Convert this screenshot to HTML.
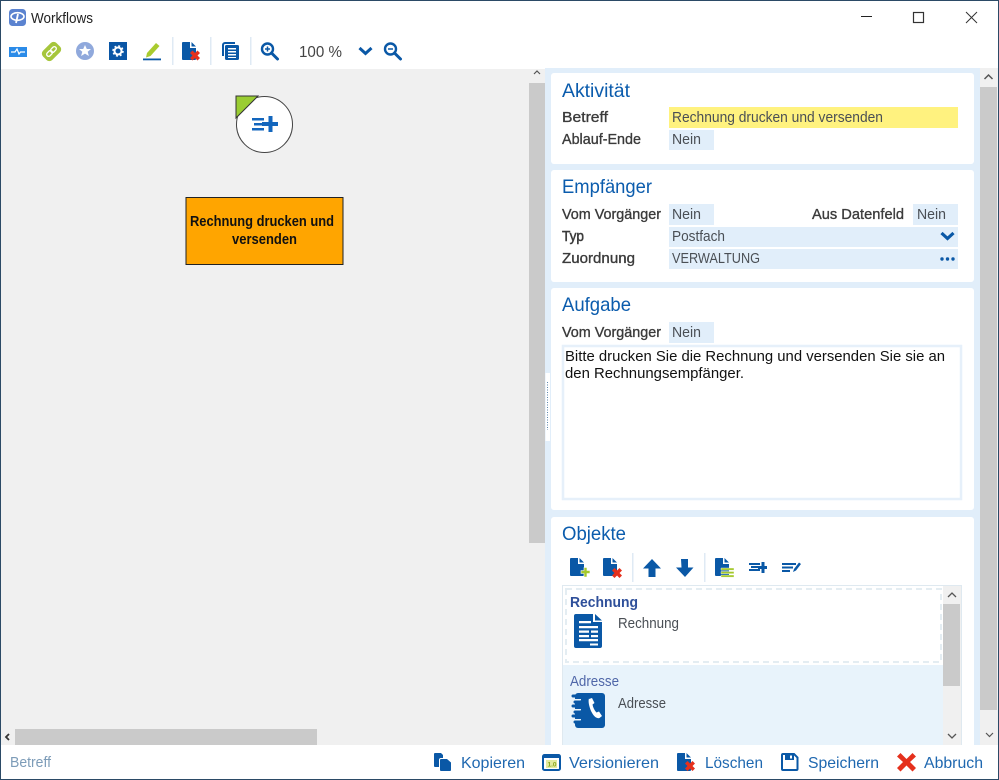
<!DOCTYPE html>
<html lang="de"><head><meta charset="utf-8"><title>Workflows</title>
<style>
html,body{margin:0;padding:0;background:#fff;width:999px;height:780px;overflow:hidden}
svg{display:block}
text{font-family:"Liberation Sans",sans-serif;font-size:15px;white-space:pre}
.l{fill:#3b3b3b;stroke:#3b3b3b;stroke-width:.35}
.v{fill:#4a4f55}
.h{fill:#0b5cad;font-size:19.500px}
.f{fill:#1f68b0;font-size:16px}
.b{fill:#0a58a6}
</style></head><body>
<svg width="999" height="780" viewBox="0 0 999 780" xmlns="http://www.w3.org/2000/svg">
<defs>
<path id="doc" d="M1 0H8V6H14V17a1 1 0 0 1-1 1H1a1 1 0 0 1-1-1V1a1 1 0 0 1 1-1ZM9.500 0L14 4.500H9.500Z"/>
<path id="x" d="M0 2.500L2.500 0L5 2.500L7.500 0L10 2.500L7.500 5L10 7.500L7.500 10L5 7.500L2.500 10L0 7.500L2.500 5Z" fill="#e5301c"/>
</defs>
<rect width="999" height="780" fill="#fff"/>
<!-- canvas -->
<rect x="1" y="69" width="544" height="676" fill="#f0f0f0"/>
<rect x="529" y="83" width="16" height="460" fill="#cacaca"/>
<rect x="15" y="729" width="302" height="16" fill="#cacaca"/>
<path d="M534 74l3-3 3 3" fill="none" stroke="#555" stroke-width="1.200"/>
<path d="M9 734l-3 3 3 3" fill="none" stroke="#333" stroke-width="1.800"/>
<!-- node -->
<circle cx="264.500" cy="124.500" r="28" fill="#fff" stroke="#444" stroke-width="1"/>
<path d="M236 96H258L236 118Z" fill="#9acd32" stroke="#333" stroke-width="1"/>
<path d="M252 118H264V120.500H252ZM254 123H262V125.500H254ZM252 128H264V130.500H252ZM268.500 116H272.500V122H278V126H272.500V132H268.500V126H262V122H268.500Z" fill="#1366bd"/>
<rect x="186" y="197.500" width="157" height="67" fill="#ffa500" stroke="#222" stroke-width="1"/>
<text x="190" y="226" font-weight="700" textLength="144" lengthAdjust="spacingAndGlyphs" fill="#111">Rechnung drucken und</text>
<text x="232" y="244" font-weight="700" textLength="65" lengthAdjust="spacingAndGlyphs" fill="#111">versenden</text>
<!-- right panel -->
<rect x="545" y="68" width="435" height="677" fill="#e1eefa"/>
<rect x="545.500" y="373" width="4.500" height="68" fill="#fff"/>
<line x1="547.500" y1="382" x2="547.500" y2="430" stroke="#5c86ad" stroke-width="1" stroke-dasharray="1 1.500"/>
<rect x="980" y="68" width="18" height="677" fill="#f0f0f0"/>
<rect x="980" y="87" width="17" height="623" fill="#cacaca"/>
<path d="M984.500 79l4-4 4 4" fill="none" stroke="#555" stroke-width="1.500"/>
<path d="M986 733l3.500 3.500 3.500-3.500" fill="none" stroke="#555" stroke-width="1.200"/>
<rect x="551" y="73" width="423" height="91" rx="3" fill="#fff"/>
<rect x="551" y="170" width="423" height="112" rx="3" fill="#fff"/>
<rect x="551" y="288" width="423" height="222" rx="3" fill="#fff"/>
<path d="M551 745V520a3 3 0 0 1 3-3H971a3 3 0 0 1 3 3V745Z" fill="#fff"/>
<!-- Aktivitaet -->
<text class="h" x="562" y="97" textLength="68" lengthAdjust="spacingAndGlyphs">Aktivität</text>
<text class="l" x="562" y="122" textLength="46" lengthAdjust="spacingAndGlyphs">Betreff</text>
<rect x="669" y="107" width="289" height="21" fill="#fff27f"/>
<text class="v" x="672" y="122" textLength="211" lengthAdjust="spacingAndGlyphs">Rechnung drucken und versenden</text>
<text class="l" x="562" y="144" textLength="79" lengthAdjust="spacingAndGlyphs">Ablauf-Ende</text>
<rect x="669" y="130" width="45" height="20" fill="#e1eefa"/>
<text class="v" x="672" y="144" textLength="29" lengthAdjust="spacingAndGlyphs">Nein</text>
<!-- Empfaenger -->
<text class="h" x="562" y="193" textLength="90" lengthAdjust="spacingAndGlyphs">Empfänger</text>
<text class="l" x="562" y="219" textLength="99" lengthAdjust="spacingAndGlyphs">Vom Vorgänger</text>
<rect x="669" y="204" width="45" height="21" fill="#e1eefa"/>
<text class="v" x="672" y="219" textLength="29" lengthAdjust="spacingAndGlyphs">Nein</text>
<text class="l" x="812" y="219" textLength="92" lengthAdjust="spacingAndGlyphs">Aus Datenfeld</text>
<rect x="913" y="204" width="45" height="21" fill="#e1eefa"/>
<text class="v" x="917" y="219" textLength="29" lengthAdjust="spacingAndGlyphs">Nein</text>
<text class="l" x="562" y="241" textLength="22" lengthAdjust="spacingAndGlyphs" style="stroke-width:.5">Typ</text>
<rect x="669" y="227" width="289" height="20" fill="#e1eefa"/>
<text class="v" x="672" y="241" textLength="53" lengthAdjust="spacingAndGlyphs">Postfach</text>
<path d="M941.500 233l6 5.500 6-5.500" fill="none" stroke="#0a58a6" stroke-width="3.200"/>
<text class="l" x="562" y="263" textLength="73" lengthAdjust="spacingAndGlyphs">Zuordnung</text>
<rect x="669" y="249" width="289" height="20" fill="#e1eefa"/>
<text class="v" x="672" y="263" textLength="88" lengthAdjust="spacingAndGlyphs">VERWALTUNG</text>
<circle cx="942" cy="259" r="1.700" class="b"/><circle cx="947.500" cy="259" r="1.700" class="b"/><circle cx="953" cy="259" r="1.700" class="b"/>
<!-- Aufgabe -->
<text class="h" x="562" y="311" textLength="69" lengthAdjust="spacingAndGlyphs">Aufgabe</text>
<text class="l" x="562" y="337" textLength="99" lengthAdjust="spacingAndGlyphs">Vom Vorgänger</text>
<rect x="669" y="322" width="45" height="21" fill="#e1eefa"/>
<text class="v" x="672" y="337" textLength="29" lengthAdjust="spacingAndGlyphs">Nein</text>
<rect x="563" y="346" width="398" height="153" fill="#fff" stroke="#e6f0fa" stroke-width="2.500"/>
<text x="565" y="361" style="font-size:14.500px" fill="#111" textLength="380" lengthAdjust="spacingAndGlyphs">Bitte drucken Sie die Rechnung und versenden Sie sie an</text>
<text x="565" y="378" style="font-size:14.500px" fill="#111" textLength="179" lengthAdjust="spacingAndGlyphs">den Rechnungsempfänger.</text>
<!-- Objekte -->
<text class="h" x="562" y="540" textLength="64" lengthAdjust="spacingAndGlyphs">Objekte</text>
<use href="#doc" x="570" y="558" class="b"/>
<path d="M581 570.500h3v-3h3v3h3v3h-3v3.500h-3v-3.500h-3Z" fill="#a4c82b" stroke="#fff" stroke-width=".6"/>
<use href="#doc" x="603" y="558" class="b"/>
<use href="#x" x="612" y="568"/>
<path d="M652 559l9 9.500h-5.500V577h-7v-8.500H643Z" class="b"/>
<path d="M681 559h7v8.500h5.500l-8.500 9.500l-9-9.500h5.500Z" class="b"/>
<rect x="632" y="553" width="1.500" height="29" fill="#dfeaf4"/>
<rect x="704" y="553" width="1.500" height="29" fill="#dfeaf4"/>
<use href="#doc" x="715" y="558" class="b"/>
<path d="M721 568h13v2.200h-13ZM721 571.500h13v2.200h-13ZM721 575h13v2.200h-13Z" fill="#a4c82b" stroke="#fff" stroke-width=".4"/>
<path d="M749 563h11v2h-11ZM751 566h7v2h-7ZM749 569h11v2h-11ZM761.500 562h3v4h2.500v3h-2.500v4h-3v-4h-3.500v-3h3.500Z" class="b"/>
<path d="M782 563h14v2h-14ZM782 566.500h11v2h-11ZM782 570h8v2h-8ZM793 572l1-3 5-6.500 2 1.500-5 6.500Z" class="b"/>
<!-- list -->
<rect x="562.500" y="585.500" width="399" height="160" fill="#fff" stroke="#dfe9f0"/>
<rect x="563" y="665" width="380" height="80" fill="#e8f3fb"/>
<rect x="566" y="589" width="375" height="73" fill="#fff" stroke="#e4edf2" stroke-width="2" stroke-dasharray="6 4"/>
<rect x="943" y="586" width="18" height="159" fill="#f0f0f0"/>
<rect x="943" y="604" width="17" height="82" fill="#cacaca"/>
<path d="M948 597l4-4 4 4" fill="none" stroke="#555" stroke-width="1.300"/>
<path d="M948 734l4 4 4-4" fill="none" stroke="#555" stroke-width="1.300"/>
<text x="570" y="607" font-weight="700" fill="#2e4f9a" textLength="68" lengthAdjust="spacingAndGlyphs">Rechnung</text>
<path d="M576 614H593V622H602V646a2 2 0 0 1-2 2H576a2 2 0 0 1-2-2V616a2 2 0 0 1 2-2ZM595 614L602 620.500H595Z" class="b"/>
<path d="M579 621h12v2.200h-12ZM579 626h19v2.200h-19ZM579 630.500h10v2.200h-10ZM591 630.500h7v2.200h-7ZM579 635h10v2.200h-10ZM591 635h7v2.200h-7ZM579 639h19v2.200h-19ZM590 643.500h8v2h-8Z" fill="#fff"/>
<text class="v" x="618" y="628" textLength="61" lengthAdjust="spacingAndGlyphs">Rechnung</text>
<text x="570" y="686" fill="#4f66a8" textLength="49" lengthAdjust="spacingAndGlyphs">Adresse</text>
<path d="M578 693H602a3 3 0 0 1 3 3V725a3 3 0 0 1-3 3H578a3 3 0 0 1-3-3V696a3 3 0 0 1 3-3Z" class="b"/>
<g fill="#e8f3fb"><rect x="575" y="699" width="6" height="3"/><rect x="575" y="709" width="6" height="3"/><rect x="575" y="719" width="6" height="3"/></g>
<g fill="none" stroke="#0a58a6" stroke-width="3" stroke-linecap="round"><path d="M573 696H580a3 3 0 0 1 0 6H575"/><path d="M573 706H580a3 3 0 0 1 0 6H575"/><path d="M573 716H580a3 3 0 0 1 0 6H575"/></g>
<path d="M589 699l3-1 2.500 5-2 1.500c.5 3 2 6 4 8l2.500-1 3 4.500-2.500 2c-3 1-6-2-8.500-7-2-5-3-10-2-12.500Z" fill="#fff"/>
<text class="v" x="618" y="708" textLength="48" lengthAdjust="spacingAndGlyphs">Adresse</text>
<!-- footer -->
<rect x="1" y="745" width="997" height="34" fill="#fff"/>
<text x="10" y="767" fill="#7d9cb8" textLength="41" lengthAdjust="spacingAndGlyphs">Betreff</text>
<path d="M435 753h6l2 2v3h-2a2 2 0 0 0-2 2v7h-4a1 1 0 0 1-1-1V754a1 1 0 0 1 1-1Z" class="b"/>
<path d="M441 759h6l4 3.500V770a1 1 0 0 1-1 1H441a1 1 0 0 1-1-1V760a1 1 0 0 1 1-1Z" class="b"/>
<text class="f" x="461" y="768" textLength="64" lengthAdjust="spacingAndGlyphs">Kopieren</text>
<rect x="543" y="755" width="17" height="15" rx="1.500" fill="#fff" stroke="#0a58a6" stroke-width="2"/>
<rect x="543" y="755" width="17" height="3" fill="#0a58a6"/>
<rect x="546" y="760" width="11" height="8" fill="#e3eb9f"/>
<text x="547.500" y="766.500" style="font-size:6.500px" font-weight="700" fill="#8aa51e">1.0</text>
<text class="f" x="569" y="768" textLength="90" lengthAdjust="spacingAndGlyphs">Versionieren</text>
<use href="#doc" x="677" y="753" class="b"/>
<use href="#x" x="685" y="761"/>
<text class="f" x="705" y="768" textLength="58" lengthAdjust="spacingAndGlyphs">Löschen</text>
<path d="M783 754H794L797.500 757.500V769a1 1 0 0 1-1 1H783a1 1 0 0 1-1-1V755a1 1 0 0 1 1-1Z" fill="#fff" stroke="#0a58a6" stroke-width="2"/>
<path d="M785 754h9v6h-9Z" class="b"/>
<rect x="790" y="755.500" width="2" height="3" fill="#fff"/>
<text class="f" x="808" y="768" textLength="71" lengthAdjust="spacingAndGlyphs">Speichern</text>
<path d="M897 756.500L900.500 753L906.500 759L912.500 753L916 756.500L910 762L916 768L912.500 771.500L906.500 765.500L900.500 771.500L897 768L903 762Z" fill="#e5301c"/>
<text class="f" x="924" y="768" textLength="59" lengthAdjust="spacingAndGlyphs">Abbruch</text>
<!-- title bar -->
<rect x="9" y="9" width="17" height="17" rx="3.500" fill="#5b83d0"/>
<ellipse cx="17.500" cy="16.500" rx="6.500" ry="3.800" fill="none" stroke="#fff" stroke-width="1.600"/>
<path d="M16 23l2-9" stroke="#fff" stroke-width="1.800" fill="none"/>
<text x="31" y="23" fill="#222" textLength="62" lengthAdjust="spacingAndGlyphs">Workflows</text>
<path d="M861 16.500h11" stroke="#222" stroke-width="1"/>
<rect x="913.500" y="12.500" width="10" height="10" fill="none" stroke="#333" stroke-width="1.200"/>
<path d="M966 12l11 11M977 12l-11 11" stroke="#333" stroke-width="1"/>
<!-- toolbar -->
<rect x="9" y="47" width="18" height="10" fill="#2b8be8"/>
<path d="M11 52h4l2-3 2 5 1.500-2H25" fill="none" stroke="#fff" stroke-width="1.200"/>
<rect x="42" y="45" width="19" height="13" rx="4" transform="rotate(-45 51.500 51.500)" fill="#a6c63c"/>
<g fill="none" stroke="#fff" stroke-width="1.300" transform="translate(51.500 51.500) rotate(-45)"><rect x="-6" y="-2" width="6.500" height="4" rx="2"/><rect x="-.5" y="-2" width="6.500" height="4" rx="2"/></g>
<circle cx="85" cy="51" r="9" fill="#90a9dc"/>
<path d="M85 45l1.800 4h4.200l-3.300 2.800 1.200 4.200-3.900-2.400-3.900 2.400 1.200-4.200-3.300-2.800h4.200Z" fill="#fff"/>
<rect x="109" y="42" width="18" height="18" fill="#0a56a5"/>
<circle cx="118" cy="51" r="3.500" fill="none" stroke="#fff" stroke-width="2"/>
<circle cx="118" cy="51" r="5" fill="none" stroke="#fff" stroke-width="1.500" stroke-dasharray="2 1.930"/>
<path d="M147 53l9-10 3.500 3-9 10-4.500 1.500Z" fill="#a9cb2f"/>
<rect x="143" y="58.500" width="18" height="1.800" fill="#0a58a6"/>
<rect x="172" y="37" width="1.500" height="28" fill="#dfeaf4"/>
<rect x="210" y="37" width="1.500" height="28" fill="#dfeaf4"/>
<rect x="250" y="37" width="1.500" height="28" fill="#dfeaf4"/>
<use href="#doc" x="182" y="42" class="b"/>
<use href="#x" x="190" y="50.500"/>
<path d="M225 42h10v2h-10a1 1 0 0 0-1 1v11h-2V45a3 3 0 0 1 3-3Z" class="b"/>
<rect x="225" y="45" width="14" height="15" rx="1.500" class="b"/>
<path d="M228 48h8v1.500h-8ZM228 51h8v1.500h-8ZM228 54h8v1.500h-8ZM228 57h8v1h-8Z" fill="#fff"/>
<circle cx="267.500" cy="49" r="5.500" fill="none" stroke="#0a58a6" stroke-width="2.400"/>
<path d="M271.500 53l6 6" stroke="#0a58a6" stroke-width="3" stroke-linecap="round"/>
<path d="M265 49h5M267.500 46.500v5" stroke="#0a58a6" stroke-width="1.500"/>
<text x="299" y="57" style="font-size:16px" fill="#444" textLength="43" lengthAdjust="spacingAndGlyphs">100 %</text>
<path d="M359.500 48l6 5.500 6-5.500" fill="none" stroke="#0a58a6" stroke-width="3"/>
<circle cx="390.500" cy="49" r="5.500" fill="none" stroke="#0a58a6" stroke-width="2.400"/>
<path d="M394.500 53l6 6" stroke="#0a58a6" stroke-width="3" stroke-linecap="round"/>
<path d="M388 49h5" stroke="#0a58a6" stroke-width="1.500"/>
<!-- window border -->
<rect x=".5" y=".5" width="998" height="779" fill="none" stroke="#2b4a66" stroke-width="1"/>
</svg>
</body></html>
